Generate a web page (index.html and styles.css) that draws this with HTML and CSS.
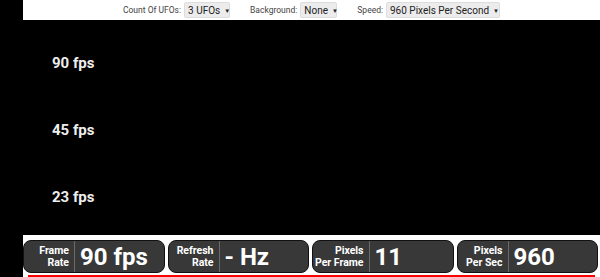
FILE: index.html
```html
<!DOCTYPE html>
<html lang="en">
<head>
    <meta charset="UTF-8">
    <meta name="viewport" content="width=device-width, initial-scale=1.0">
    <title>UFO Motion Test</title>
    <link rel="stylesheet" href="styles.css">
</head>
<body>
    <div class="page">
        <div class="controls">
            <span class="ctl-label">Count Of UFOs:</span>
            <span class="select count"><span>3 UFOs</span><span class="arrow">▼</span></span>
            <span class="ctl-label">Background:</span>
            <span class="select bg"><span>None</span><span class="arrow">▼</span></span>
            <span class="ctl-label">Speed:</span>
            <span class="select speed"><span>960 Pixels Per Second</span><span class="arrow">▼</span></span>
        </div>
        <div class="stage">
            <div class="lane">90 fps</div>
            <div class="lane">45 fps</div>
            <div class="lane">23 fps</div>
        </div>
        <div class="stats">
            <div class="cards">
                <div class="card">
                    <div class="label">Frame<br>Rate</div>
                    <div class="value">90 fps</div>
                </div>
                <div class="card">
                    <div class="label">Refresh<br>Rate</div>
                    <div class="value">- Hz</div>
                </div>
                <div class="card">
                    <div class="label">Pixels<br>Per Frame</div>
                    <div class="value">11</div>
                </div>
                <div class="card">
                    <div class="label">Pixels<br>Per Sec</div>
                    <div class="value">960</div>
                </div>
            </div>
            <div class="redline"></div>
        </div>
    </div>
</body>
</html>
```

FILE: styles.css
```css
body {
    margin: 0;
    padding: 0;
    background-color: #000;
    font-family: Roboto, "Liberation Sans", sans-serif;
    overflow: hidden;
}
.page { padding-left: 23px; }
.controls {
    background-color: #fff;
    height: 20px;
    display: flex;
    align-items: center;
    justify-content: center;
    font-size: 8.5px;
    color: #444;
    white-space: nowrap;
}
.ctl-label { margin-right: 3px; }
.select {
    display: flex;
    align-items: center;
    justify-content: space-between;
    flex: none;
    box-sizing: border-box;
    height: 16px;
    padding: 0 4px 0 3px;
    background-color: #ececec;
    border: 1px solid #ddd;
    border-radius: 2px;
    font-size: 10px;
    color: #222;
    margin-right: 20px;
    white-space: nowrap;
}
.select:last-child { margin-right: 0; }
.select .arrow { font-size: 6px; margin-left: 4px; }
.select.count { width: 46px; }
.select.bg { width: 37px; }
.select.speed { width: 114px; }
.stage {
    height: 215px;
    box-sizing: border-box;
    padding: 33px 0 0 29px;
    display: flex;
    flex-direction: column;
    gap: 47px;
}
.lane {
    color: #eee;
    font-size: 15px;
    font-weight: bold;
    line-height: 20px;
}
.stats {
    background-color: #fff;
    height: 42px;
    box-sizing: border-box;
    padding-top: 5px;
}
.cards {
    display: flex;
    gap: 3px;
    padding-right: 2px;
}
.card {
    flex: 1;
    height: 33px;
    box-sizing: border-box;
    display: flex;
    align-items: stretch;
    background-color: #383838;
    border: 1px solid #111;
    border-radius: 8px;
    color: #fff;
}
.card .label {
    min-width: 51px;
    box-sizing: border-box;
    padding: 0 5px 0 2px;
    text-align: right;
    font-size: 10.5px;
    font-weight: bold;
    line-height: 12px;
    display: flex;
    align-items: center;
    justify-content: flex-end;
    border-right: 1px solid #6a6a6a;
}
.card .value {
    padding-left: 5px;
    font-size: 24px;
    font-weight: bold;
    display: flex;
    align-items: center;
}
.redline {
    height: 2px;
    background-color: #f00;
    margin: 2px 5px 0 5px;
}
```
